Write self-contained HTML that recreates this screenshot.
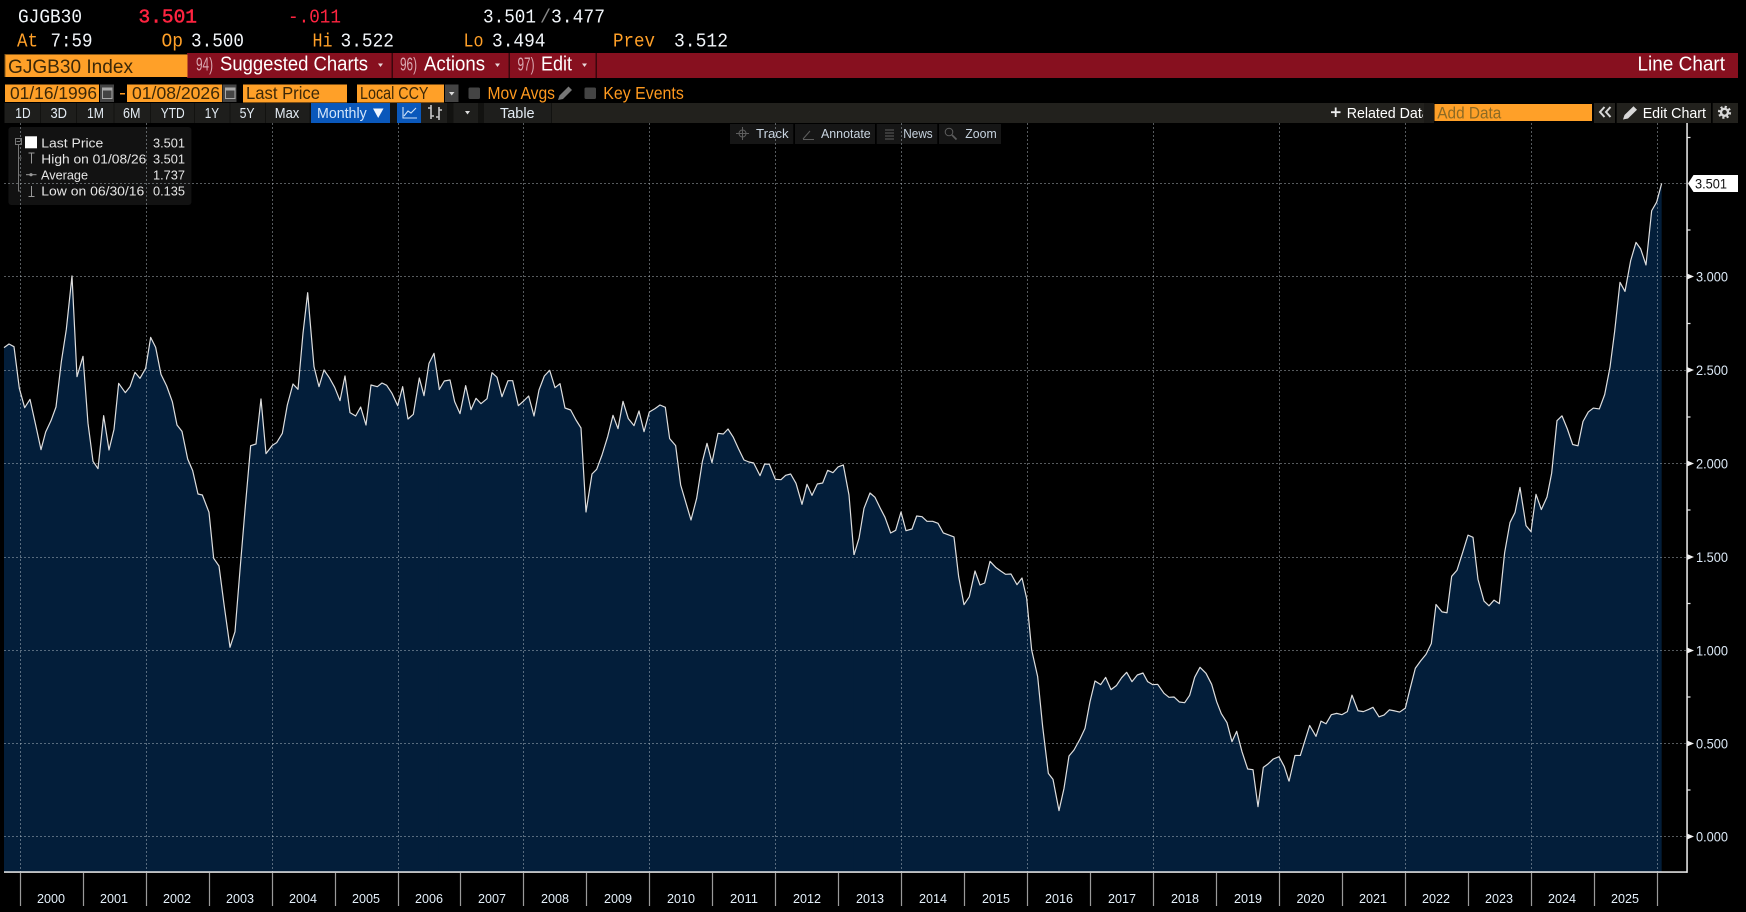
<!DOCTYPE html>
<html><head><meta charset="utf-8"><title>GJGB30 Index Line Chart</title>
<style>
html,body{margin:0;padding:0;background:#000;width:1746px;height:912px;overflow:hidden}
svg{display:block}
.m{font-family:"Liberation Mono",monospace}
.s{font-family:"Liberation Sans",sans-serif}
.h{font-size:19px}
.w{fill:#f2f6fa}.o{fill:#ffa028}.r{fill:#ff2440}
.b{font-size:20px;fill:#fff}.n{font-size:18px;fill:#d9a9b2}
.d{font-size:17.5px;fill:#3c2808}
.t{font-size:15px;fill:#e4ecf4}
.l{font-size:13px;fill:#e6e6e6}
.v{font-size:13px;fill:#c8d4e0}
.y{font-size:13px;fill:#e4f0fa}
.a{font-size:14px;fill:#dbe8f5}
.g{stroke:#c8d0d8;stroke-opacity:.43;stroke-width:1;stroke-dasharray:2 2;fill:none}
.c{fill:none;stroke:#dedede;stroke-width:1.2;stroke-linejoin:round}
.f{fill:#031e3a;stroke:none}
</style></head><body>
<svg width="1746" height="912" viewBox="0 0 1746 912" xmlns="http://www.w3.org/2000/svg">
<defs><clipPath id="rd"><rect x="1325" y="103" width="98" height="20"/></clipPath></defs>
<rect width="1746" height="912" fill="#000"/>

<!-- header -->
<text class="m h w" x="18" y="22.5" textLength="64" lengthAdjust="spacingAndGlyphs">GJGB30</text>
<text class="m h r" x="138.5" y="22.5" textLength="58.5" lengthAdjust="spacingAndGlyphs" stroke="#ff2440" stroke-width=".5">3.501</text>
<text class="m h r" x="288" y="22.5" textLength="53" lengthAdjust="spacingAndGlyphs">-.011</text>
<text class="m h w" x="483" y="22.5" textLength="53" lengthAdjust="spacingAndGlyphs">3.501</text>
<text class="m h" x="540" y="22.5" textLength="11" lengthAdjust="spacingAndGlyphs" fill="#888">/</text>
<text class="m h w" x="551" y="22.5" textLength="54" lengthAdjust="spacingAndGlyphs">3.477</text>
<text class="m h o" x="17" y="46.5" textLength="21" lengthAdjust="spacingAndGlyphs">At</text>
<text class="m h w" x="50.5" y="46.5" textLength="42" lengthAdjust="spacingAndGlyphs">7:59</text>
<text class="m h o" x="161.5" y="46.5" textLength="21.5" lengthAdjust="spacingAndGlyphs">Op</text>
<text class="m h w" x="191" y="46.5" textLength="53" lengthAdjust="spacingAndGlyphs">3.500</text>
<text class="m h o" x="312.5" y="46.5" textLength="20" lengthAdjust="spacingAndGlyphs">Hi</text>
<text class="m h w" x="340.5" y="46.5" textLength="53.5" lengthAdjust="spacingAndGlyphs">3.522</text>
<text class="m h o" x="463.5" y="46.5" textLength="20" lengthAdjust="spacingAndGlyphs">Lo</text>
<text class="m h w" x="492" y="46.5" textLength="53.5" lengthAdjust="spacingAndGlyphs">3.494</text>
<text class="m h o" x="613" y="46.5" textLength="42" lengthAdjust="spacingAndGlyphs">Prev</text>
<text class="m h w" x="674" y="46.5" textLength="54" lengthAdjust="spacingAndGlyphs">3.512</text>

<!-- red bar -->
<rect x="187" y="53" width="1551" height="25" fill="#87101f"/>
<rect x="391.5" y="53" width="1.5" height="25" fill="#3a060c"/>
<rect x="508.5" y="53" width="1.5" height="25" fill="#3a060c"/>
<rect x="595.5" y="53" width="1.5" height="25" fill="#3a060c"/>
<rect x="4.5" y="54" width="183" height="23" fill="#ffa028"/>
<rect x="4.5" y="54" width="183" height="1" fill="#8a5a18"/>
<rect x="4.5" y="54" width="1" height="23" fill="#8a5a18"/>
<text class="s" x="8" y="72.8" font-size="19" fill="#3c2808" textLength="125" lengthAdjust="spacingAndGlyphs">GJGB30 Index</text>
<text class="s n" x="196" y="70.5" textLength="17" lengthAdjust="spacingAndGlyphs">94)</text>
<text class="s b" x="220" y="70.5" textLength="148" lengthAdjust="spacingAndGlyphs">Suggested Charts</text>
<polygon points="378,63.5 383,63.5 380.5,67" fill="#e8d8da"/>
<text class="s n" x="400" y="70.5" textLength="17" lengthAdjust="spacingAndGlyphs">96)</text>
<text class="s b" x="424" y="70.5" textLength="61" lengthAdjust="spacingAndGlyphs">Actions</text>
<polygon points="495,63.5 500,63.5 497.5,67" fill="#e8d8da"/>
<text class="s n" x="517.5" y="70.5" textLength="17" lengthAdjust="spacingAndGlyphs">97)</text>
<text class="s b" x="541" y="70.5" textLength="31" lengthAdjust="spacingAndGlyphs">Edit</text>
<polygon points="582,63.5 587,63.5 584.5,67" fill="#e8d8da"/>
<text class="s b" x="1637.5" y="70.5" textLength="87.5" lengthAdjust="spacingAndGlyphs">Line Chart</text>

<!-- controls row -->
<rect x="5" y="84.5" width="94" height="17.5" fill="#ffa028"/>
<text class="s d" x="10" y="99.2" textLength="87" lengthAdjust="spacingAndGlyphs">01/16/1996</text>
<rect x="100" y="84.5" width="14" height="17.5" fill="#444"/>
<rect x="102.5" y="89" width="9.5" height="9.5" fill="none" stroke="#a8a8a8"/><rect x="102" y="87.5" width="10.5" height="3" fill="#a8a8a8"/>
<rect x="120" y="93" width="5" height="1.5" fill="#ff9a1f"/>
<rect x="127" y="84.5" width="95" height="17.5" fill="#ffa028"/>
<text class="s d" x="132" y="99.2" textLength="88" lengthAdjust="spacingAndGlyphs">01/08/2026</text>
<rect x="222.5" y="84.5" width="14" height="17.5" fill="#444"/>
<rect x="225.5" y="89" width="9.5" height="9.5" fill="none" stroke="#a8a8a8"/><rect x="225" y="87.5" width="10.5" height="3" fill="#a8a8a8"/>
<rect x="243" y="84.5" width="104" height="18" fill="#ffa028"/>
<text class="s d" x="246" y="99.2" textLength="74" lengthAdjust="spacingAndGlyphs">Last Price</text>
<rect x="357" y="84.5" width="87" height="18" fill="#ffa028"/>
<text class="s d" x="360" y="99.2" textLength="68.5" lengthAdjust="spacingAndGlyphs">Local CCY</text>
<rect x="445" y="84.5" width="13.5" height="17.5" fill="#444"/>
<polygon points="449,92 454.5,92 451.7,95.5" fill="#ddd"/>
<rect x="468.5" y="87.5" width="11.5" height="11.5" rx="1.5" fill="#444"/>
<text class="s" x="487.5" y="99" font-size="17.5" fill="#ff9a1f" textLength="67.5" lengthAdjust="spacingAndGlyphs">Mov Avgs</text>
<path d="M558 100l1.5-4.5 9-9 3.5 3.5-9 9z" fill="#777"/>
<rect x="584.5" y="87.5" width="11.5" height="11.5" rx="1.5" fill="#444"/>
<text class="s" x="603.3" y="99" font-size="17.5" fill="#ff9a1f" textLength="80.5" lengthAdjust="spacingAndGlyphs">Key Events</text>

<!-- toolbar -->
<rect x="4.5" y="103" width="1320.5" height="20" fill="#22211d"/>
<rect x="4.5" y="103" width="547" height="20" fill="#1e1e1c"/>
<g fill="#121210">
<rect x="40" y="103" width="1" height="20"/><rect x="76" y="103" width="1" height="20"/><rect x="113.5" y="103" width="1" height="20"/><rect x="150" y="103" width="1" height="20"/><rect x="194" y="103" width="1" height="20"/><rect x="229.5" y="103" width="1" height="20"/><rect x="265" y="103" width="1" height="20"/><rect x="309.5" y="103" width="1.5" height="20"/>
<rect x="390" y="103" width="7" height="20"/><rect x="447" y="103" width="6.5" height="20"/><rect x="478" y="103" width="6" height="20"/><rect x="551" y="103" width="1" height="20"/>
</g>
<text class="s t" x="15.3" y="118" textLength="15.3" lengthAdjust="spacingAndGlyphs">1D</text>
<text class="s t" x="50.5" y="118" textLength="16.5" lengthAdjust="spacingAndGlyphs">3D</text>
<text class="s t" x="87" y="118" textLength="17" lengthAdjust="spacingAndGlyphs">1M</text>
<text class="s t" x="123" y="118" textLength="17.5" lengthAdjust="spacingAndGlyphs">6M</text>
<text class="s t" x="160.7" y="118" textLength="24" lengthAdjust="spacingAndGlyphs">YTD</text>
<text class="s t" x="204.7" y="118" textLength="14.3" lengthAdjust="spacingAndGlyphs">1Y</text>
<text class="s t" x="239.6" y="118" textLength="15" lengthAdjust="spacingAndGlyphs">5Y</text>
<text class="s t" x="274.8" y="118" textLength="24.5" lengthAdjust="spacingAndGlyphs">Max</text>
<rect x="311" y="103" width="79" height="20" fill="#0a58bb"/>
<text class="s" x="317" y="118" font-size="15" fill="#d4e6fa" textLength="49.7" lengthAdjust="spacingAndGlyphs">Monthly</text>
<polygon points="373,108.5 383.5,108.5 378.2,118" fill="#f0f6ff"/>
<rect x="397" y="103" width="24" height="20" fill="#0a58bb"/>
<path d="M403 107v11h14M404 116l4-5 3 2 5-5" fill="none" stroke="#cfe2f8" stroke-width="1.1"/>
<path d="M431 105v14M431 108h-3M431 116h3M439 107v13M439 110h3M439 117h-3" fill="none" stroke="#c8c8c8" stroke-width="1.6"/>
<polygon points="465,111 470,111 467.5,114.5" fill="#ddd"/>
<text class="s t" x="500" y="118" textLength="34.6" lengthAdjust="spacingAndGlyphs">Table</text>

<rect x="1325" y="103" width="99" height="20" fill="#22211d"/>
<rect x="1424" y="103" width="10" height="20" fill="#1b1a17"/>
<path d="M1331 112.2h9.5M1335.7 107.5v9.5" stroke="#eee" stroke-width="1.8"/>
<text class="s t" clip-path="url(#rd)" x="1346.7" y="118" style="fill:#fff" textLength="83" lengthAdjust="spacingAndGlyphs">Related Data</text>
<rect x="1434.5" y="104" width="157.5" height="17" fill="#ffa028"/>
<text class="s" x="1437.3" y="118.3" font-size="17" fill="#8c6a24" textLength="64" lengthAdjust="spacingAndGlyphs">Add Data</text>
<rect x="1594" y="103" width="21" height="20" fill="#22211d"/>
<path d="M1604.5 107l-4.5 5 4.5 5M1610.5 107l-4.5 5 4.5 5" fill="none" stroke="#d8d8d8" stroke-width="2"/>
<rect x="1616.7" y="103" width="94.3" height="20" fill="#22211d"/>
<path d="M1623 119.5l1.5-4.5 9-8.8 3.5 3.5-9 8.8z" fill="#d8d8d8"/>
<text class="s t" x="1642.7" y="118" style="fill:#fff" textLength="63.3" lengthAdjust="spacingAndGlyphs">Edit Chart</text>
<rect x="1712.7" y="103" width="25.3" height="20" fill="#22211d"/>
<circle cx="1724.5" cy="112.3" r="3.5" fill="none" stroke="#d8d8d8" stroke-width="2.4"/>
<circle cx="1724.5" cy="112.3" r="5.5" fill="none" stroke="#d8d8d8" stroke-width="2.2" stroke-dasharray="2.16 2.16"/>

<!-- legend and overlay backgrounds -->
<rect x="8.4" y="127" width="183" height="78" rx="3" fill="#121212"/>
<g fill="#161616">
<rect x="730" y="124" width="63.3" height="20"/>
<rect x="795" y="124" width="80" height="20"/>
<rect x="876.7" y="124" width="60.6" height="20"/>
<rect x="939" y="124" width="62" height="20"/>
</g>

<!-- filled area -->
<g transform="translate(0,260) scale(.33333)"><polygon class="f" points="12,1836 12,263 27,252 42,260 58,385 74,443 90,418 107,495 123,569 137,516 153,482 168,441 184,305 199,208 216,48 231,350 249,289 264,490 279,604 294,626 311,467 327,570 342,508 356,370 376,398 390,380 405,337 420,355 437,325 452,232 467,262 483,343 500,378 517,425 531,495 546,514 563,597 578,632 594,702 607,705 627,757 641,895 657,918 673,1040 690,1162 705,1115 720,930 735,750 752,557 768,552 783,417 798,581 817,556 830,548 847,520 862,435 879,372 894,388 909,220 923,98 942,320 957,380 972,330 988,353 1004,382 1020,422 1035,348 1050,458 1067,468 1082,441 1098,495 1113,375 1132,380 1146,369 1160,376 1176,400 1193,437 1208,380 1224,477 1240,463 1258,354 1272,407 1287,310 1302,280 1318,388 1320,1836"/></g>
<g transform="translate(430,340) scale(.33333)"><polygon class="f" points="27,1596 27,150 43,123 60,120 74,185 90,221 107,137 123,209 138,175 153,191 171,176 186,98 201,112 216,170 234,122 248,122 265,197 281,183 296,168 312,228 327,150 343,108 359,91 375,143 390,131 405,204 422,210 438,240 453,264 468,516 486,402 500,388 516,345 533,290 549,226 564,266 579,184 595,236 612,257 627,213 642,275 658,216 675,206 690,195 706,202 719,296 737,317 752,435 783,540 800,475 817,365 831,310 846,368 864,280 880,282 894,267 910,292 925,325 942,360 957,366 971,369 990,407 1004,372 1018,373 1036,418 1053,419 1067,406 1082,402 1098,430 1116,493 1131,433 1146,466 1162,432 1178,429 1193,391 1209,398 1224,381 1240,375 1257,465 1272,645 1287,590 1302,505 1302,1596"/></g>
<g transform="translate(850,440) scale(.33333)"><polygon class="f" points="12,1296 12,345 27,295 42,205 60,159 75,172 90,203 105,232 122,279 137,271 153,216 168,272 186,267 200,228 216,230 231,244 248,244 264,250 280,279 296,285 312,291 326,410 342,494 358,470 375,393 390,435 404,429 420,364 437,382 452,393 467,403 483,402 501,434 516,414 530,475 545,630 563,710 578,860 595,1000 609,1018 627,1112 642,1045 657,948 672,930 690,897 705,865 720,785 735,723 752,734 767,712 783,749 799,737 815,713 830,697 846,725 862,705 879,699 893,725 908,734 923,733 942,760 957,772 972,771 988,786 1004,788 1019,766 1034,712 1050,682 1068,700 1085,733 1100,785 1114,821 1131,848 1146,905 1160,874 1176,935 1193,987 1209,989 1224,1100 1240,982 1254,972 1270,957 1287,950 1303,980 1317,1024 1317,1296"/></g>
<g transform="translate(1270,160) scale(.33333,.43367)"><polygon class="f" points="43,1642 43,1399 57,1433 75,1373 91,1373 119,1304 138,1329 153,1294 168,1300 184,1279 200,1276 216,1279 232,1272 246,1234 264,1270 280,1272 296,1267 309,1262 327,1284 342,1280 358,1268 372,1270 389,1273 406,1264 420,1220 436,1172 452,1155 468,1140 484,1115 498,1025 516,1042 531,1044 545,960 561,946 578,905 594,865 609,870 624,967 642,1017 657,1028 672,1015 688,1023 704,905 720,836 735,813 750,755 768,843 783,857 798,771 814,806 831,777 845,722 861,601 876,590 892,620 908,656 924,659 939,603 955,581 970,572 988,574 1004,541 1020,478 1034,395 1050,282 1065,303 1082,232 1098,190 1112,205 1128,242 1145,117 1160,97 1175,54 1175,1642"/></g>

<!-- grid -->
<path class="g" d="M4 183.5H1687M4 276.5H1687M4 370.5H1687M4 463.5H1687M4 557.5H1687M4 650.5H1687M4 743.5H1687M4 836.5H1687"/>
<path class="g" d="M20.5 123V872M146.5 123V872M272.5 123V872M398.5 123V872M523.5 123V872M649.5 123V872M775.5 123V872M901.5 123V872M1027.5 123V872M1153.5 123V872M1279.5 123V872M1405.5 123V872M1531.5 123V872M1657.5 123V872"/>

<!-- price line -->
<g transform="translate(0,260) scale(.33333)"><polyline class="c" vector-effect="non-scaling-stroke" points="12,263 27,252 42,260 58,385 74,443 90,418 107,495 123,569 137,516 153,482 168,441 184,305 199,208 216,48 231,350 249,289 264,490 279,604 294,626 311,467 327,570 342,508 356,370 376,398 390,380 405,337 420,355 437,325 452,232 467,262 483,343 500,378 517,425 531,495 546,514 563,597 578,632 594,702 607,705 627,757 641,895 657,918 673,1040 690,1162 705,1115 720,930 735,750 752,557 768,552 783,417 798,581 817,556 830,548 847,520 862,435 879,372 894,388 909,220 923,98 942,320 957,380 972,330 988,353 1004,382 1020,422 1035,348 1050,458 1067,468 1082,441 1098,495 1113,375 1132,380 1146,369 1160,376 1176,400 1193,437 1208,380 1224,477 1240,463 1258,354 1272,407 1287,310 1302,280 1318,388"/></g>
<g transform="translate(430,340) scale(.33333)"><polyline class="c" vector-effect="non-scaling-stroke" points="27,150 43,123 60,120 74,185 90,221 107,137 123,209 138,175 153,191 171,176 186,98 201,112 216,170 234,122 248,122 265,197 281,183 296,168 312,228 327,150 343,108 359,91 375,143 390,131 405,204 422,210 438,240 453,264 468,516 486,402 500,388 516,345 533,290 549,226 564,266 579,184 595,236 612,257 627,213 642,275 658,216 675,206 690,195 706,202 719,296 737,317 752,435 783,540 800,475 817,365 831,310 846,368 864,280 880,282 894,267 910,292 925,325 942,360 957,366 971,369 990,407 1004,372 1018,373 1036,418 1053,419 1067,406 1082,402 1098,430 1116,493 1131,433 1146,466 1162,432 1178,429 1193,391 1209,398 1224,381 1240,375 1257,465 1272,645"/></g>
<g transform="translate(850,440) scale(.33333)"><polyline class="c" vector-effect="non-scaling-stroke" points="12,345 27,295 42,205 60,159 75,172 90,203 105,232 122,279 137,271 153,216 168,272 186,267 200,228 216,230 231,244 248,244 264,250 280,279 296,285 312,291 326,410 342,494 358,470 375,393 390,435 404,429 420,364 437,382 452,393 467,403 483,402 501,434 516,414 530,475 545,630 563,710 578,860 595,1000 609,1018 627,1112 642,1045 657,948 672,930 690,897 705,865 720,785 735,723 752,734 767,712 783,749 799,737 815,713 830,697 846,725 862,705 879,699 893,725 908,734 923,733 942,760 957,772 972,771 988,786 1004,788 1019,766 1034,712 1050,682 1068,700 1085,733 1100,785 1114,821 1131,848 1146,905 1160,874 1176,935 1193,987 1209,989 1224,1100 1240,982 1254,972 1270,957 1287,950 1303,980 1317,1024"/></g>
<g transform="translate(1270,160) scale(.33333,.43367)"><polyline class="c" vector-effect="non-scaling-stroke" points="57,1433 75,1373 91,1373 119,1304 138,1329 153,1294 168,1300 184,1279 200,1276 216,1279 232,1272 246,1234 264,1270 280,1272 296,1267 309,1262 327,1284 342,1280 358,1268 372,1270 389,1273 406,1264 420,1220 436,1172 452,1155 468,1140 484,1115 498,1025 516,1042 531,1044 545,960 561,946 578,905 594,865 609,870 624,967 642,1017 657,1028 672,1015 688,1023 704,905 720,836 735,813 750,755 768,843 783,857 798,771 814,806 831,777 845,722 861,601 876,590 892,620 908,656 924,659 939,603 955,581 970,572 988,574 1004,541 1020,478 1034,395 1050,282 1065,303 1082,232 1098,190 1112,205 1128,242 1145,117 1160,97 1175,54"/></g>

<!-- overlay buttons text -->
<g fill="none" stroke="#5e5e5e" stroke-width="1">
<circle cx="742.5" cy="133.5" r="3.5"/><path d="M742.5 127v13M736 133.5h13"/>
<path d="M803 139l7-8M803 139.5h11"/>
<path d="M885 130h9M885 133h9M885 136h9M885 139h9"/>
<circle cx="949" cy="132" r="3.8"/><path d="M952 135l4.5 4.5" stroke-width="1.6"/>
</g>
<text class="s v" x="756" y="138" textLength="32.7" lengthAdjust="spacingAndGlyphs">Track</text>
<text class="s v" x="821" y="138" textLength="49.7" lengthAdjust="spacingAndGlyphs">Annotate</text>
<text class="s v" x="903.3" y="138" textLength="29.4" lengthAdjust="spacingAndGlyphs">News</text>
<text class="s v" x="965.3" y="138" textLength="31.4" lengthAdjust="spacingAndGlyphs">Zoom</text>

<!-- legend -->
<rect x="15.5" y="138.5" width="6" height="6" fill="none" stroke="#777"/>
<path d="M16.5 141.5h4M18.5 145v46h2M18.5 158h3M18.5 175h3" stroke="#777" fill="none"/>
<rect x="25" y="136.3" width="12" height="12" fill="#fff"/>
<path d="M28.5 153h6M31.5 153v10.5" stroke="#999" stroke-width="1" fill="none"/>
<path d="M26 174.7h10.5" stroke="#999"/><circle cx="31" cy="174.7" r="1.6" fill="#999"/>
<path d="M31.5 186v10.5M28.5 196.5h6" stroke="#999" stroke-width="1" fill="none"/>
<text class="s l" x="41.3" y="147.3" textLength="62" lengthAdjust="spacingAndGlyphs">Last Price</text>
<text class="s l" x="153" y="147.3" textLength="32" lengthAdjust="spacingAndGlyphs">3.501</text>
<text class="s l" x="41.3" y="163.3" textLength="105" lengthAdjust="spacingAndGlyphs">High on 01/08/26</text>
<text class="s l" x="153" y="163.3" textLength="32" lengthAdjust="spacingAndGlyphs">3.501</text>
<text class="s l" x="41" y="179.3" textLength="47" lengthAdjust="spacingAndGlyphs">Average</text>
<text class="s l" x="153" y="179.3" textLength="32" lengthAdjust="spacingAndGlyphs">1.737</text>
<text class="s l" x="41.3" y="195.3" textLength="103" lengthAdjust="spacingAndGlyphs">Low on 06/30/16</text>
<text class="s l" x="153" y="195.3" textLength="32" lengthAdjust="spacingAndGlyphs">0.135</text>

<!-- axes -->
<rect x="4" y="871.3" width="1683.5" height="1.5" fill="#f0f0f0"/>
<rect x="1686.3" y="123" width="1.5" height="749.8" fill="#f0f0f0"/>
<path stroke="#e8e8e8" stroke-width="1.2" fill="none" d="M1687 137.5h3.5M1687 230h3.5M1687 323.5h3.5M1687 417h3.5M1687 510h3.5M1687 603.5h3.5M1687 697h3.5M1687 790h3.5"/>
<g fill="#f0f0f0">
<polygon points="1687,273.5 1694,276.5 1687,279.5"/>
<polygon points="1687,367 1694,370 1687,373"/>
<polygon points="1687,460.5 1694,463.5 1687,466.5"/>
<polygon points="1687,554 1694,557 1687,560"/>
<polygon points="1687,647.5 1694,650.5 1687,653.5"/>
<polygon points="1687,740.5 1694,743.5 1687,746.5"/>
<polygon points="1687,833.5 1694,836.5 1687,839.5"/>
</g>
<text class="s a" x="1696" y="281.5" textLength="32" lengthAdjust="spacingAndGlyphs">3.000</text>
<text class="s a" x="1696" y="375" textLength="32" lengthAdjust="spacingAndGlyphs">2.500</text>
<text class="s a" x="1696" y="468.5" textLength="32" lengthAdjust="spacingAndGlyphs">2.000</text>
<text class="s a" x="1696" y="562" textLength="32" lengthAdjust="spacingAndGlyphs">1.500</text>
<text class="s a" x="1696" y="655.5" textLength="32" lengthAdjust="spacingAndGlyphs">1.000</text>
<text class="s a" x="1696" y="748.5" textLength="32" lengthAdjust="spacingAndGlyphs">0.500</text>
<text class="s a" x="1696" y="841.5" textLength="32" lengthAdjust="spacingAndGlyphs">0.000</text>
<polygon points="1688,183.5 1693.5,175 1738,175 1738,192 1693.5,192" fill="#fff"/>
<text class="s" x="1695" y="188.5" font-size="14" fill="#111" textLength="32" lengthAdjust="spacingAndGlyphs">3.501</text>

<!-- x ticks -->
<path stroke="#9a9a9a" stroke-width="1.2" fill="none" d="M20.5 873V906M83.5 873V906M146.5 873V906M209.5 873V906M272.5 873V906M335.5 873V906M398.5 873V906M460.5 873V906M523.5 873V906M586.5 873V906M649.5 873V906M712.5 873V906M775.5 873V906M838.5 873V906M901.5 873V906M964.5 873V906M1027.5 873V906M1090.5 873V906M1153.5 873V906M1216.5 873V906M1279.5 873V906M1342.5 873V906M1405.5 873V906M1468.5 873V906M1531.5 873V906M1594.5 873V906M1657.5 873V906"/>
<g class="s y">
<text class="s y" x="37" y="903" textLength="28" lengthAdjust="spacingAndGlyphs">2000</text>
<text class="s y" x="100" y="903" textLength="28" lengthAdjust="spacingAndGlyphs">2001</text>
<text class="s y" x="163" y="903" textLength="28" lengthAdjust="spacingAndGlyphs">2002</text>
<text class="s y" x="226" y="903" textLength="28" lengthAdjust="spacingAndGlyphs">2003</text>
<text class="s y" x="289" y="903" textLength="28" lengthAdjust="spacingAndGlyphs">2004</text>
<text class="s y" x="352" y="903" textLength="28" lengthAdjust="spacingAndGlyphs">2005</text>
<text class="s y" x="415" y="903" textLength="28" lengthAdjust="spacingAndGlyphs">2006</text>
<text class="s y" x="478" y="903" textLength="28" lengthAdjust="spacingAndGlyphs">2007</text>
<text class="s y" x="541" y="903" textLength="28" lengthAdjust="spacingAndGlyphs">2008</text>
<text class="s y" x="604" y="903" textLength="28" lengthAdjust="spacingAndGlyphs">2009</text>
<text class="s y" x="667" y="903" textLength="28" lengthAdjust="spacingAndGlyphs">2010</text>
<text class="s y" x="730" y="903" textLength="28" lengthAdjust="spacingAndGlyphs">2011</text>
<text class="s y" x="793" y="903" textLength="28" lengthAdjust="spacingAndGlyphs">2012</text>
<text class="s y" x="856" y="903" textLength="28" lengthAdjust="spacingAndGlyphs">2013</text>
<text class="s y" x="919" y="903" textLength="28" lengthAdjust="spacingAndGlyphs">2014</text>
<text class="s y" x="982" y="903" textLength="28" lengthAdjust="spacingAndGlyphs">2015</text>
<text class="s y" x="1045" y="903" textLength="28" lengthAdjust="spacingAndGlyphs">2016</text>
<text class="s y" x="1108" y="903" textLength="28" lengthAdjust="spacingAndGlyphs">2017</text>
<text class="s y" x="1171" y="903" textLength="28" lengthAdjust="spacingAndGlyphs">2018</text>
<text class="s y" x="1234" y="903" textLength="28" lengthAdjust="spacingAndGlyphs">2019</text>
<text class="s y" x="1296.5" y="903" textLength="28" lengthAdjust="spacingAndGlyphs">2020</text>
<text class="s y" x="1359" y="903" textLength="28" lengthAdjust="spacingAndGlyphs">2021</text>
<text class="s y" x="1422" y="903" textLength="28" lengthAdjust="spacingAndGlyphs">2022</text>
<text class="s y" x="1485" y="903" textLength="28" lengthAdjust="spacingAndGlyphs">2023</text>
<text class="s y" x="1548" y="903" textLength="28" lengthAdjust="spacingAndGlyphs">2024</text>
<text class="s y" x="1611" y="903" textLength="28" lengthAdjust="spacingAndGlyphs">2025</text>
</g>
</svg>
</body></html>
